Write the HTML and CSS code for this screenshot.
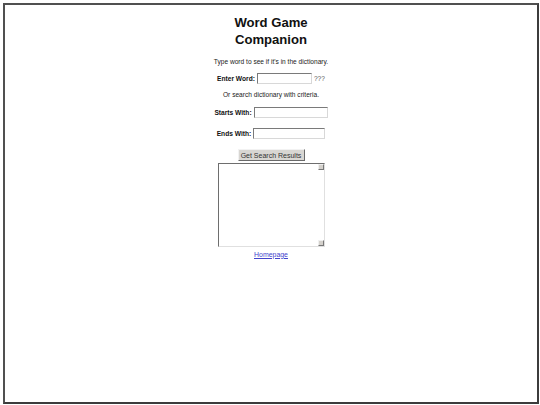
FILE: index.html
```html
<!DOCTYPE html>
<html>
<head>
<meta charset="utf-8">
<title>Word Game Companion</title>
<link rel="stylesheet" href="styles.css">
</head>
<body>
<div class="frame">
  <h1 class="title">Word Game<br>Companion</h1>
  <p class="note note-first">Type word to see if it's in the dictionary.</p>
  <div class="row row-enter">
    <label class="lbl">Enter Word:</label>
    <input class="field field-enter" type="text">
    <span class="qq">???</span>
  </div>
  <p class="note note-second">Or search dictionary with criteria.</p>
  <div class="row row-starts">
    <label class="lbl">Starts With:</label>
    <input class="field field-starts" type="text">
  </div>
  <div class="row row-ends">
    <label class="lbl">Ends With:</label>
    <input class="field field-ends" type="text">
  </div>
  <div class="row row-btn">
    <button class="btn" type="button">Get Search Results</button>
  </div>
  <div class="results">
    <textarea class="results-area"></textarea>
    <span class="sb sb-up"></span>
    <span class="sb sb-down"></span>
  </div>
  <div class="row row-link">
    <a class="home" href="#">Homepage</a>
  </div>
</div>
</body>
</html>
```
FILE: styles.css
```css
html, body {
  margin: 0;
  padding: 0;
  background: #ffffff;
}
body {
  font-family: "Liberation Sans", Arial, sans-serif;
  color: #000;
}
.frame {
  box-sizing: border-box;
  width: 536px;
  height: 401px;
  margin: 3px 1px 1px 3px;
  border-top: 2px solid #505050;
  border-left: 2px solid #505050;
  border-right: 2px solid #3c3c3c;
  border-bottom: 2px solid #3c3c3c;
  display: flex;
  flex-direction: column;
  align-items: center;
  text-align: center;
}
.title {
  margin: 9px 0 0 0;
  font-size: 13.1px;
  line-height: 17px;
  font-weight: bold;
  color: #111;
}
.note {
  margin: 0;
  font-size: 6.6px;
  line-height: 10px;
  color: #222;
}
.note-first { margin-top: 9px; }
.note-second { margin-top: 6px; }
.row {
  display: flex;
  align-items: center;
  justify-content: center;
  height: 11px;
}
.row-enter { margin-top: 6px; }
.row-starts { margin-top: 7px; }
.row-ends { margin-top: 10px; }
.row-btn { margin-top: 10px; height: 12px; }
.row-link { margin-top: 2px; height: 10px; }
.lbl {
  font-size: 6.65px;
  font-weight: bold;
  margin-right: 2px;
  color: #111;
}
.field {
  box-sizing: border-box;
  height: 11px;
  padding: 0;
  margin: 0;
  background: #fff;
  border-top: 1px solid #7a7a7a;
  border-left: 1px solid #7a7a7a;
  border-right: 1px solid #d8d8d8;
  border-bottom: 1px solid #d8d8d8;
}
.field-enter { width: 55px; }
.field-starts { width: 74px; }
.field-ends { width: 72px; }
.row-ends .field { height: 10.5px; }
.qq {
  font-size: 6.6px;
  color: #555;
  margin-left: 2px;
}
.btn {
  box-sizing: border-box;
  width: 67px;
  height: 12px;
  padding: 0;
  margin: 0;
  font-family: "Liberation Sans", Arial, sans-serif;
  font-size: 7px;
  color: #333;
  background: #d8d6d2;
  border-top: 1px solid #f2f2f2;
  border-left: 1px solid #f2f2f2;
  border-right: 1px solid #6a6a6a;
  border-bottom: 1px solid #6a6a6a;
}
.results {
  position: relative;
  width: 107px;
  height: 84px;
  margin-top: 2px;
}
.results-area {
  box-sizing: border-box;
  display: block;
  width: 107px;
  height: 84px;
  margin: 0;
  padding: 0;
  resize: none;
  overflow: hidden;
  background: #fff;
  border-top: 1px solid #6e6e6e;
  border-left: 1px solid #6e6e6e;
  border-right: 1px solid #e0e0e0;
  border-bottom: 1px solid #e0e0e0;
}
.sb {
  position: absolute;
  right: 1px;
  width: 6px;
  height: 6px;
  box-sizing: border-box;
  background: #d4d1cc;
  border-top: 1px solid #f0f0f0;
  border-left: 1px solid #f0f0f0;
  border-right: 1px solid #777;
  border-bottom: 1px solid #777;
}
.sb-up { top: 1px; }
.sb-down { bottom: 1px; }
.home {
  font-size: 6.95px;
  color: #4444cc;
  text-decoration: underline;
}
```
